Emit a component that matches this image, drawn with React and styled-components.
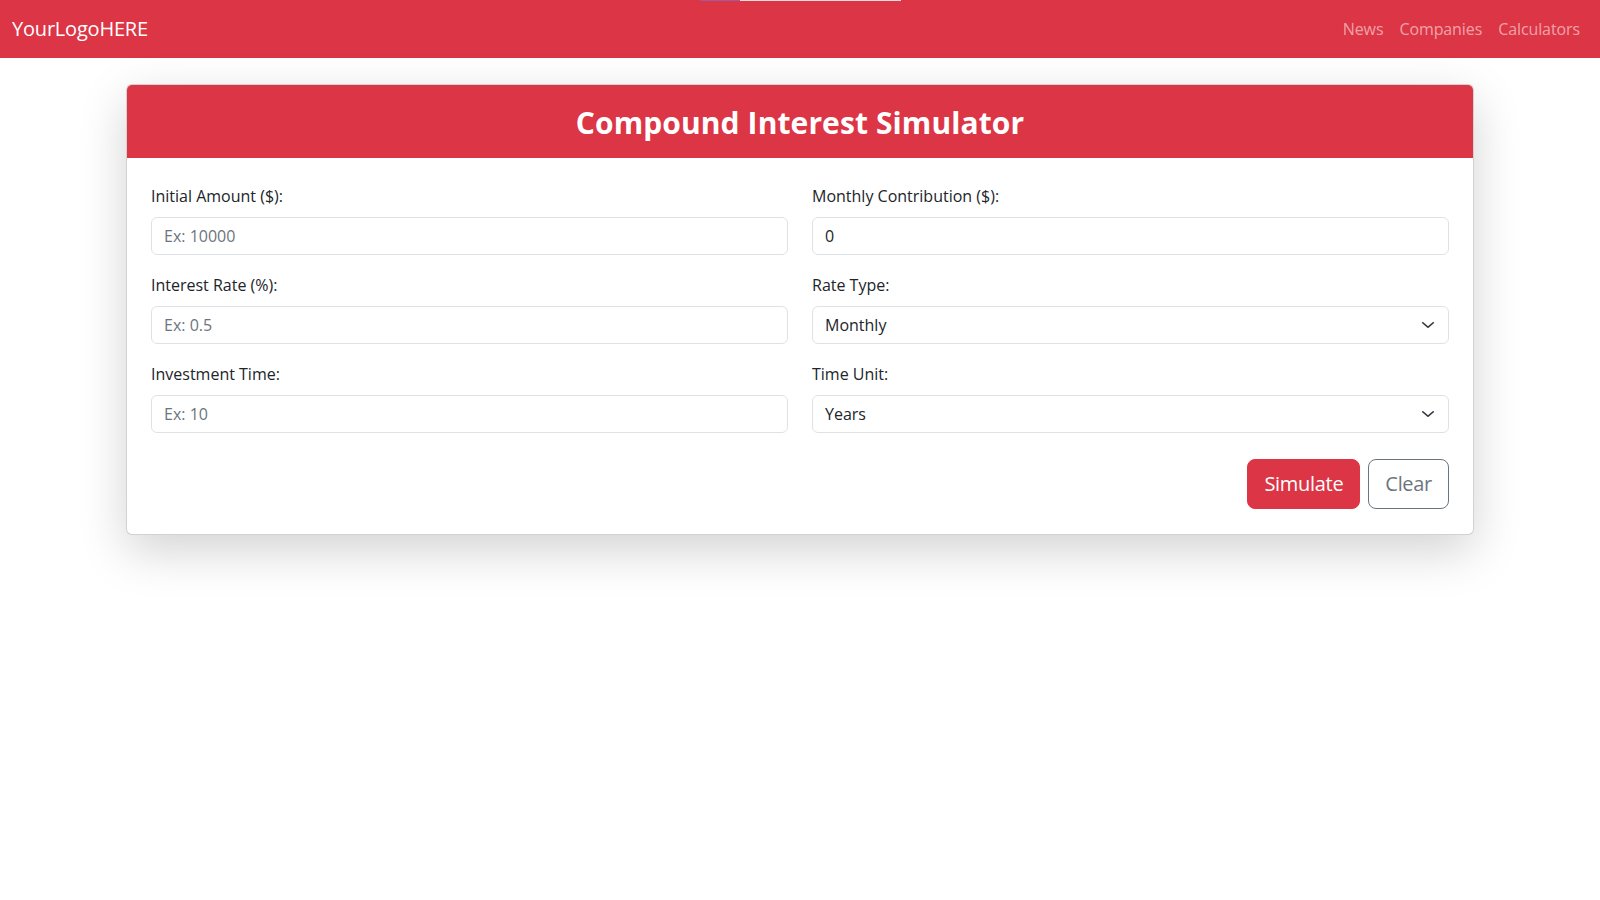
import React from "react";
import styled, { createGlobalStyle } from "styled-components";

const GlobalStyle = createGlobalStyle`
  *, *::before, *::after { box-sizing: border-box; }
  html, body { margin: 0; padding: 0; }
  body {
    font-family: "Open Sans", "Noto Sans", "Liberation Sans", sans-serif;
    font-size: 16px;
    line-height: 1.5;
    color: #212529;
    background: #fff;
  }
`;

const Page = styled.div`
  min-height: 900px;
  position: relative;
`;

const LoadStrip = styled.div`
  position: absolute;
  top: 0;
  left: 700px;
  width: 201px;
  height: 1px;
  background: linear-gradient(
    to right,
    #a2589e 0,
    #a2589e 40px,
    #f6d9dd 40px,
    #f6d9dd 100%
  );
  z-index: 10;
`;

const Navbar = styled.nav`
  height: 58px;
  background: #dc3545;
  display: flex;
  align-items: center;
  justify-content: space-between;
  padding: 0 12px;
`;

const Brand = styled.a`
  font-size: 20px;
  line-height: 30px;
  color: #fff;
  text-decoration: none;
  letter-spacing: -0.2px;
`;

const NavLinks = styled.ul`
  display: flex;
  list-style: none;
  margin: 0;
  padding: 0;
`;

const NavLink = styled.a`
  display: block;
  padding: 0 8px;
  font-size: 16px;
  color: rgba(255, 255, 255, 0.55);
  text-decoration: none;
  letter-spacing: -0.1px;
`;

const Container = styled.main`
  width: 1348px;
  margin: 26px auto 0;
`;

const Card = styled.section`
  background: #fff;
  border: 1px solid rgba(0, 0, 0, 0.175);
  border-radius: 6px;
  box-shadow: 0 1rem 3rem rgba(0, 0, 0, 0.175);
  overflow: hidden;
`;

const CardHeader = styled.header`
  background: #dc3545;
  color: #fff;
  text-align: center;
  padding: 21px 16px 18px;
`;

const Title = styled.h3`
  margin: 0;
  font-size: 30px;
  line-height: 34px;
  font-weight: 700;
  letter-spacing: 0.1px;
`;

const CardBody = styled.div`
  padding: 26px 24px 25px;
`;

const FormGrid = styled.div`
  display: grid;
  grid-template-columns: 1fr 1fr;
  column-gap: 24px;
  row-gap: 18px;
`;

const Field = styled.div`
  display: flex;
  flex-direction: column;
`;

const Label = styled.label`
  font-size: 16px;
  line-height: 24px;
  margin-bottom: 9px;
  color: #212529;
`;

const controlStyles = `
  display: block;
  width: 100%;
  height: 38px;
  padding: 6px 12px;
  font-family: inherit;
  font-size: 16px;
  line-height: 24px;
  color: #212529;
  background: #fff;
  border: 1px solid #dee2e6;
  border-radius: 6px;
  outline: none;
`;

const Input = styled.input`
  ${controlStyles}
  &::placeholder {
    color: #6c757d;
    opacity: 1;
  }
`;

const SelectWrap = styled.div`
  position: relative;
`;

const Select = styled.select`
  ${controlStyles}
  appearance: none;
  -webkit-appearance: none;
  padding-right: 36px;
`;

const Chevron = styled.svg`
  position: absolute;
  right: 14px;
  top: 50%;
  width: 14px;
  height: 12px;
  margin-top: -6px;
  pointer-events: none;
`;

const Actions = styled.div`
  display: flex;
  justify-content: flex-end;
  gap: 8px;
  margin-top: 26px;
`;

const Button = styled.button`
  height: 50px;
  padding: 0 16px;
  font-family: inherit;
  font-size: 20px;
  line-height: 30px;
  border-radius: 8px;
  cursor: pointer;
  letter-spacing: -0.3px;
  border: 1px solid ${(p) => (p.$variant === "outline" ? "#6c757d" : "#dc3545")};
  background: ${(p) => (p.$variant === "outline" ? "#fff" : "#dc3545")};
  color: ${(p) => (p.$variant === "outline" ? "#6c757d" : "#fff")};
`;

function ChevronIcon() {
  return (
    <Chevron viewBox="0 0 16 16" preserveAspectRatio="none" aria-hidden="true">
      <path
        d="M2 5l6 6 6-6"
        fill="none"
        stroke="#343a40"
        strokeWidth="2"
        strokeLinecap="round"
        strokeLinejoin="round"
      />
    </Chevron>
  );
}

export default function App() {
  return (
    <Page>
      <GlobalStyle />
      <LoadStrip />
      <Navbar>
        <Brand href="#">YourLogoHERE</Brand>
        <NavLinks>
          <li><NavLink href="#">News</NavLink></li>
          <li><NavLink href="#">Companies</NavLink></li>
          <li><NavLink href="#">Calculators</NavLink></li>
        </NavLinks>
      </Navbar>
      <Container>
        <Card>
          <CardHeader>
            <Title>Compound Interest Simulator</Title>
          </CardHeader>
          <CardBody>
            <FormGrid>
              <Field>
                <Label htmlFor="initial">Initial Amount ($):</Label>
                <Input id="initial" placeholder="Ex: 10000" />
              </Field>
              <Field>
                <Label htmlFor="monthly">Monthly Contribution ($):</Label>
                <Input id="monthly" defaultValue="0" />
              </Field>
              <Field>
                <Label htmlFor="rate">Interest Rate (%):</Label>
                <Input id="rate" placeholder="Ex: 0.5" />
              </Field>
              <Field>
                <Label htmlFor="rateType">Rate Type:</Label>
                <SelectWrap>
                  <Select id="rateType" defaultValue="monthly">
                    <option value="monthly">Monthly</option>
                    <option value="yearly">Yearly</option>
                  </Select>
                  <ChevronIcon />
                </SelectWrap>
              </Field>
              <Field>
                <Label htmlFor="time">Investment Time:</Label>
                <Input id="time" placeholder="Ex: 10" />
              </Field>
              <Field>
                <Label htmlFor="unit">Time Unit:</Label>
                <SelectWrap>
                  <Select id="unit" defaultValue="years">
                    <option value="years">Years</option>
                    <option value="months">Months</option>
                  </Select>
                  <ChevronIcon />
                </SelectWrap>
              </Field>
            </FormGrid>
            <Actions>
              <Button type="button">Simulate</Button>
              <Button type="button" $variant="outline">Clear</Button>
            </Actions>
          </CardBody>
        </Card>
      </Container>
    </Page>
  );
}
